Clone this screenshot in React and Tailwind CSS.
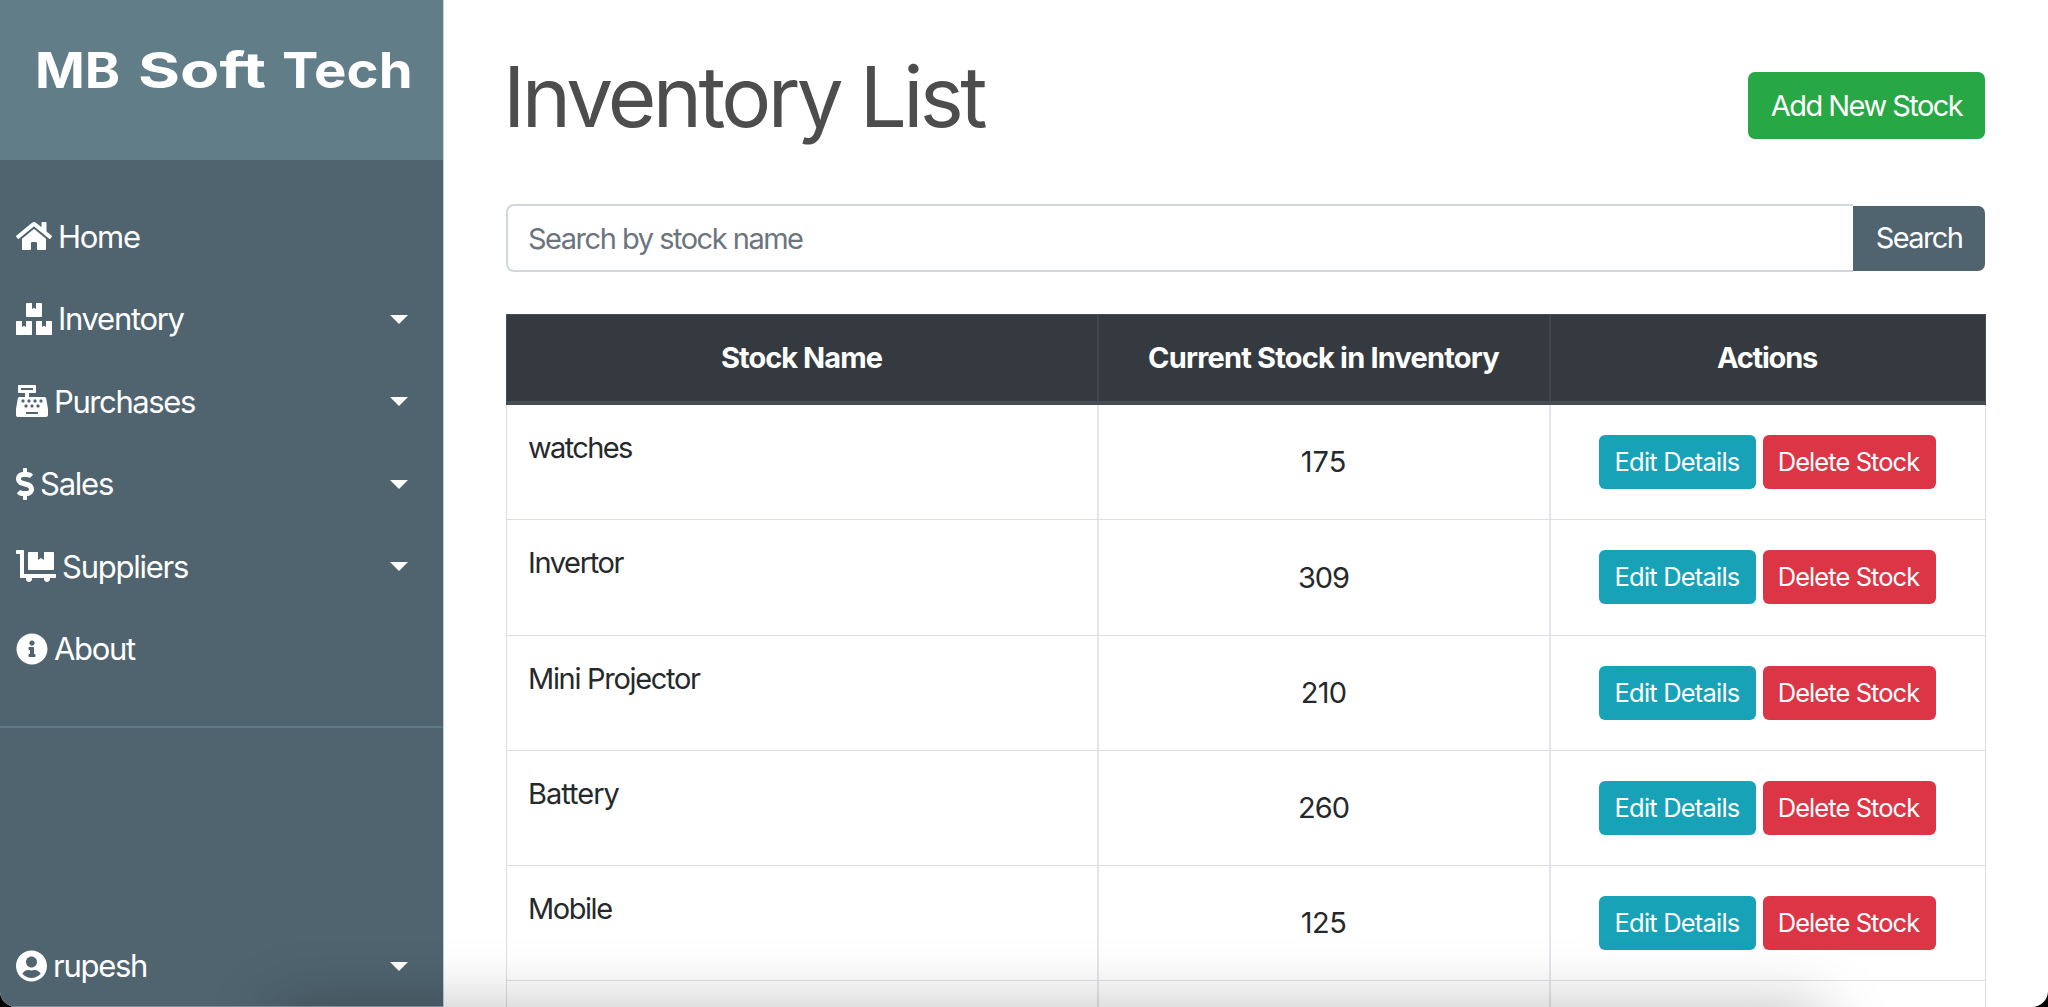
import React from "react";
import {
  FaHome,
  FaBoxes,
  FaCashRegister,
  FaDollarSign,
  FaDollyFlatbed,
  FaInfoCircle,
  FaUserCircle,
} from "react-icons/fa";

const NAV = [
  { label: "Home", icon: FaHome, size: "w-9", tracking: "tracking-[-1.3px]", menu: false },
  { label: "Inventory", icon: FaBoxes, size: "w-9", tracking: "tracking-[-1.3px]", menu: true },
  { label: "Purchases", icon: FaCashRegister, size: "w-8", tracking: "tracking-[-1.4px]", menu: true },
  { label: "Sales", icon: FaDollarSign, size: "w-[18px]", tracking: "tracking-[-1.25px]", menu: true },
  { label: "Suppliers", icon: FaDollyFlatbed, size: "w-10", tracking: "tracking-[-1.25px]", menu: true },
  { label: "About", icon: FaInfoCircle, size: "w-8", tracking: "tracking-[-1.3px]", menu: false },
];

const STOCK = [
  { name: "watches", count: "175", nameTracking: "tracking-[-1.65px]", countTracking: "tracking-[0px]" },
  { name: "Invertor", count: "309", nameTracking: "tracking-[-1.37px]", countTracking: "tracking-[-1px]" },
  { name: "Mini Projector", count: "210", nameTracking: "tracking-[-1.3px]", countTracking: "tracking-[-0.7px]" },
  { name: "Battery", count: "260", nameTracking: "tracking-[-1px]", countTracking: "tracking-[-1px]" },
  { name: "Mobile", count: "125", nameTracking: "tracking-[-1.45px]", countTracking: "tracking-[-0.5px]" },
];

function Caret() {
  return (
    <svg className="mt-px ml-auto h-[9px] w-[18px]" viewBox="0 0 18 9" fill="currentColor">
      <path d="M0 0h18L9 9z" />
    </svg>
  );
}

function NavItem({ label, icon: Icon, size, tracking, menu }) {
  return (
    <a className="flex h-[82.5px] shrink-0 items-center pr-[35.5px] pl-4 text-[31px] leading-none">
      <Icon className={`h-8 shrink-0 ${size}`} />
      <span className={`ml-[6px] ${tracking}`}>{label}</span>
      {menu && <Caret />}
    </a>
  );
}

function Sidebar() {
  return (
    <aside className="flex h-full w-[443px] shrink-0 flex-col bg-[#4f646f] text-white">
      <div className="flex h-40 shrink-0 bg-[#607d88] pl-[35px] text-[50px] leading-[141px] font-bold whitespace-pre">
        <span className="w-[79px] origin-left scale-x-[1.07]">MB</span>
        <span className="w-[24px]"> </span>
        <span className="w-[119px] origin-left scale-x-[1.285]">Soft</span>
        <span className="w-[25px]"> </span>
        <span className="origin-left scale-x-[1.09]">Tech</span>
      </div>
      <nav className="flex flex-col border-b-2 border-[#5e7986] pt-[35px] pb-9">
        {NAV.map((item) => (
          <NavItem key={item.label} {...item} />
        ))}
      </nav>
      <div className="mt-auto">
        <NavItem label="rupesh" icon={FaUserCircle} size="w-[31px]" tracking="tracking-[-1.28px]" menu />
      </div>
    </aside>
  );
}

function Row({ row }) {
  return (
    <div className="grid h-[115.25px] shrink-0 grid-cols-[592px_452px_1fr] border-x border-b border-[#dbdfe4] text-[29px] text-[#26292c]">
      <div className={`border-r-2 border-[#e4e6eb] pt-[21px] pl-[21px] leading-[44px] ${row ? row.nameTracking : ""}`}>
        {row && row.name}
      </div>
      <div
        className={`flex items-center justify-center border-r-2 border-[#e4e6eb] pr-px ${row ? row.countTracking : ""}`}
      >
        {row && row.count}
      </div>
      {row && (
        <div className="flex items-center justify-center gap-[7px] pr-px text-[25.5px] text-white">
          <button className="h-[54px] w-[157px] rounded-md bg-[#17a2b8] pr-px tracking-[-0.8px]">Edit Details</button>
          <button className="h-[54px] w-[173px] rounded-md bg-[#dc3545] pr-[2px] tracking-[-0.93px]">Delete Stock</button>
        </div>
      )}
    </div>
  );
}

export default function App() {
  return (
    <div className="h-[1007px] w-[2048px] overflow-hidden bg-black font-['Inter',sans-serif]">
      <div className="relative flex h-full overflow-hidden rounded-b-[16px] bg-white">
        <Sidebar />
        <main className="flex min-w-0 flex-1 flex-col border-l border-[#c3d0d8] pr-[63px] pl-[62px]">
          <header className="mt-[72px] flex h-[67px] shrink-0 items-center justify-between">
            <h1 className="-mt-[17px] -ml-[3px] text-[83.5px] leading-none tracking-[-3.68px] text-[#4d4d4d]">
              Inventory List
            </h1>
            <button className="h-[67px] w-[237px] rounded-[7px] bg-[#28a745] text-[29px] tracking-[-1.55px] text-white">
              Add New Stock
            </button>
          </header>
          <form className="mt-[65px] flex h-[68px] shrink-0 items-center">
            <input
              className="h-[68px] min-w-0 flex-1 rounded-l-[8px] border-2 border-r-0 border-[#d1d8dd] pl-5 text-[29px] tracking-[-1.49px] placeholder:text-[#6c757d]"
              placeholder="Search by stock name"
            />
            <button
              type="button"
              className="h-[65px] w-[132px] rounded-r-[7px] bg-[#4f646f] text-[29px] tracking-[-1.62px] text-white"
            >
              Search
            </button>
          </form>
          <section className="-mr-px mt-[42px] flex flex-col">
            <div className="grid h-[91px] grid-cols-[592px_452px_1fr] border border-b-4 border-[#454d55] bg-[#343a40] text-[29px] font-bold text-white">
              <div className="flex items-center justify-center border-r-2 border-[#40474e] pr-px tracking-[-0.96px]">
                Stock Name
              </div>
              <div className="flex items-center justify-center border-r-2 border-[#40474e] pr-px tracking-[-0.81px]">
                Current Stock in Inventory
              </div>
              <div className="flex items-center justify-center pr-[2px] tracking-[-1.23px]">Actions</div>
            </div>
            {STOCK.map((row) => (
              <Row key={row.name} row={row} />
            ))}
            <Row />
          </section>
        </main>
        <div className="pointer-events-none absolute top-full right-[225px] left-[275px] h-20 shadow-[0_0_64px_rgba(0,0,0,0.25)]" />
        <div className="pointer-events-none absolute bottom-0 left-0 h-px w-[443px] bg-[#7d8f9a]" />
      </div>
    </div>
  );
}
